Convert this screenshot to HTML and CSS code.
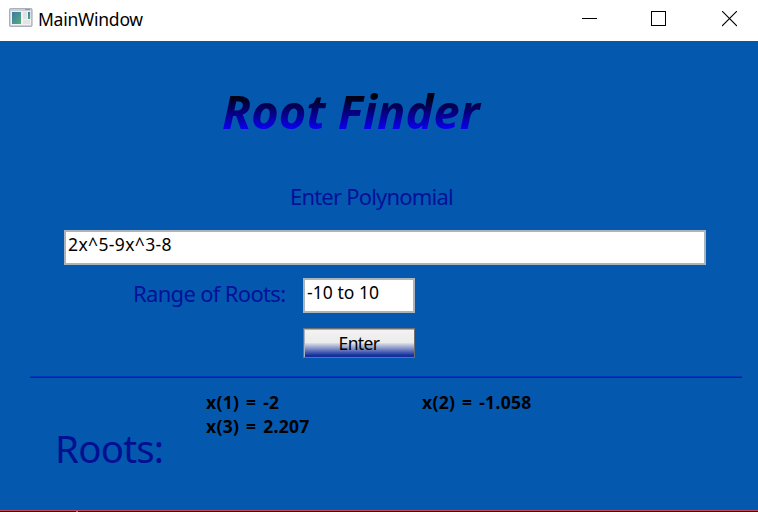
FILE: index.html
```html
<!DOCTYPE html>
<html lang="en">
<head>
<meta charset="utf-8">
<title>MainWindow</title>
<link rel="stylesheet" href="styles.css">
</head>
<body>
<div class="window">
  <header class="titlebar">
    <svg class="app-icon" width="24" height="20" viewBox="0 0 24 20">
      <defs><linearGradient id="pane" x1="0" y1="0" x2="1" y2="1"><stop offset="0" stop-color="#3f79a8"/><stop offset="1" stop-color="#55ad78"/></linearGradient></defs>
      <rect x=".7" y=".7" width="22.2" height="17.6" rx="1.2" fill="#f2f2f3" stroke="#a9b0b9" stroke-width="1.4"/>
      <path d="M1.5 2.2H22.2" stroke="#c9ced6" stroke-width="1.8"/>
      <path d="M16 1.5h5" stroke="#929aa5"/>
      <rect x="3" y="4" width="9" height="12" fill="url(#pane)"/>
      <rect x="14" y="4" width="4" height="7" fill="#dfe1e3"/>
      <rect x="19" y="4" width="2.2" height="7" fill="url(#pane)"/>
      <rect x="14" y="12" width="7.2" height="4" fill="#e4e4e5"/>
    </svg>
    <span class="caption">MainWindow</span>
    <div class="controls">
      <svg width="15" height="16" viewBox="0 0 15 16"><path d="M0 7.5h15" stroke="#000"/></svg>
      <svg width="15" height="16" viewBox="0 0 15 16"><rect x=".5" y=".5" width="14" height="14" fill="none" stroke="#000"/></svg>
      <svg class="close" width="15" height="16" viewBox="0 0 15 16"><path d="M0 0l15 15M15 0L0 15" stroke="#000" stroke-width="1.1"/></svg>
    </div>
  </header>
  <main class="content">
    <h1 class="title">Root Finder</h1>
    <label class="label poly-label" for="poly">Enter Polynomial</label>
    <input class="field poly" id="poly" value="2x^5-9x^3-8">
    <div class="range-row">
      <label class="label range-label" for="range">Range of Roots:</label>
      <input class="field range" id="range" value="-10 to 10">
    </div>
    <button class="enter">Enter</button>
    <div class="divider"></div>
    <section class="results">
      <h2 class="roots">Roots:</h2>
      <div class="values">
        <span>x(1) = -2</span><span>x(2) = -1.058</span>
        <span>x(3) = 2.207</span>
      </div>
    </section>
  </main>
  <footer class="edge"></footer>
</div>
</body>
</html>
```
FILE: styles.css
```css
* { box-sizing: border-box; }
body { margin: 0; font-family: "Noto Sans", "Open Sans", sans-serif; font-size: 17.5px; color: #000; }
.window { width: 758px; height: 512px; display: flex; flex-direction: column; overflow: hidden; }
.titlebar { height: 41px; background: #fff; display: flex; align-items: flex-start; padding-left: 9px; flex: none; }
.app-icon { margin-top: 8px; }
.caption { margin-left: 5px; line-height: 38px; letter-spacing: -0.25px; white-space: nowrap; }
.controls { margin: 11px 21px 0 auto; display: flex; gap: 54px; }
.controls svg { display: block; }
.controls .close { margin-left: 2px; }
.content { height: 469px; background: #0459ae; display: flex; flex-direction: column; align-items: flex-start; flex: none; }
.title { margin: 40px 0 0 222px; padding-right: 8px; font-size: 47px; line-height: 60px; font-weight: 700; font-style: italic; letter-spacing: 0.05px; white-space: nowrap; background: linear-gradient(#000 20%, #00000c 25%, #0c00f0 80%); -webkit-background-clip: text; background-clip: text; color: transparent; }
.label { font-size: 22px; line-height: 30px; color: #03109a; white-space: nowrap; }
.poly-label { margin: 40px 0 0 290px; letter-spacing: -0.8px; }
.field { display: block; height: 35px; margin: 0; border: 2px solid #abb3bd; border-radius: 0; background: #fff; padding: 0 0 7px 2px; font: inherit; line-height: 24px; outline: 0; color: #000; }
.poly { width: 642px; margin: 19px 0 0 64px; letter-spacing: 0.37px; }
.range-row { display: flex; margin-top: 13px; }
.range-label { width: 170px; margin-left: 133px; letter-spacing: -0.68px; }
.range { width: 112px; letter-spacing: 0.05px; }
.enter { width: 112px; height: 30px; margin: 15px 0 0 303px; padding: 0; border: 1px solid #707070; border-radius: 0; font: inherit; line-height: 28px; letter-spacing: -0.6px; color: #000; background: linear-gradient(#f3f3f3, #ebebeb 49%, #d6d8e4 52%, #1430a0 94%); box-shadow: inset 0 1px #a9b4c0, inset 1px 0 #a9b4c0; }
.divider { width: 712px; height: 2px; margin: 18px 0 0 30px; background: linear-gradient(#0639ba 50%, #0618cb 50%); }
.results { display: flex; margin-top: 12px; }
.roots { width: 151px; margin: 33px 0 0 55px; font-size: 38.5px; line-height: 50px; font-weight: 400; color: #020f91; letter-spacing: -0.8px; white-space: nowrap; }
.values { display: grid; grid-template-columns: 216px 216px; grid-auto-rows: 24px; line-height: 24px; font-weight: 700; letter-spacing: 0.3px; word-spacing: 2px; }
.edge { height: 2px; border-top: 1px solid #bd4a5e; background: linear-gradient(90deg, #180b10 76px, #8b8080 76px, #8b8080 78px, #180b10 78px); flex: none; }
```
